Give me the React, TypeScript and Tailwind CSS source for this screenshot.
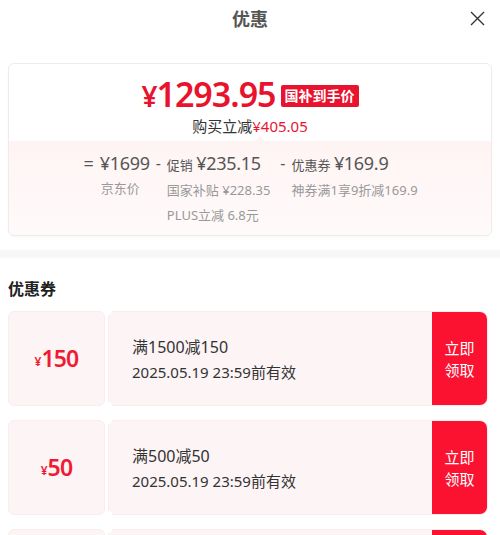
import React from "react";

const coupons = [
  { amt: "150", title: "满1500减150", date: "2025.05.19 23:59前有效" },
  { amt: "50", title: "满500减50", date: "2025.05.19 23:59前有效" },
  { amt: "20", title: "满200减20", date: "2025.05.19 23:59前有效" },
];

function Coupon({ amt, title, date }: { amt: string; title: string; date: string }) {
  return (
    <div className="relative flex h-[95px] w-[480px] shrink-0 gap-[3px]">
      <div className="flex w-[97px] items-center justify-center rounded-[6px] border border-[#fbecee] bg-[#fdf4f5] text-[#f01a32]">
        <span className="mt-[6px] text-[12px] font-semibold">¥</span>
        <span className="text-[23px] font-semibold leading-none tracking-[-0.8px]">{amt}</span>
      </div>
      <div className="flex flex-1 overflow-hidden rounded-[6px] rounded-r-[8px] border border-[#fbecee] bg-[#fdf4f5]">
        <div className="flex flex-1 flex-col justify-center pl-[23px] text-[#333]">
          <div className="text-[16px] leading-[26px]">{title}</div>
          <div className="text-[15px] leading-[24px]">{date}</div>
        </div>
        <div className="flex w-[55px] flex-col items-center justify-center bg-[#fa1230] text-[15px] leading-[22px] text-white">
          <span>立即</span>
          <span>领取</span>
        </div>
      </div>
      <div className="absolute left-[96px] top-[-4px] h-[8px] w-[8px] rounded-full bg-white" />
      <div className="absolute bottom-[-4px] left-[96px] h-[8px] w-[8px] rounded-full bg-white" />
    </div>
  );
}

export default function App() {
  return (
    <div
      className="h-[535px] w-[500px] overflow-hidden bg-white"
      style={{ fontFamily: '"Noto Sans", "Noto Sans CJK SC", sans-serif' }}
    >
      <div className="relative flex h-[38px] items-center justify-center">
        <span className="text-[18px] font-bold text-[#555]">优惠</span>
        <svg
          className="absolute right-[15px] top-[11px]"
          width="15"
          height="15"
          viewBox="0 0 15 15"
          fill="none"
          stroke="#333"
          strokeWidth="1.4"
        >
          <path d="M1 1 L14 14 M14 1 L1 14" />
        </svg>
      </div>

      <div className="mx-[8px] mt-[25px] overflow-hidden rounded-[6px] border border-[#f1eaea] shadow-[0_1px_2px_rgba(0,0,0,0.03)]">
        <div className="flex flex-col items-center pb-[5px] pt-[12px]">
          <div className="flex items-center">
            <span className="text-[34px] font-semibold leading-[36px] tracking-[-1px] text-[#e8142f]">
              <span className="text-[28px]">¥</span>1293.95
            </span>
            <span className="ml-[5px] mt-[2px] rounded-[2px] bg-[#e8142f] px-[4px] text-[14px] font-bold leading-[22px] text-white">
              国补到手价
            </span>
          </div>
          <div className="mt-[2px] text-[15px] leading-[20px] text-[#333]">
            购买立减<span className="text-[#e8142f]">¥405.05</span>
          </div>
        </div>
        <div className="relative bg-gradient-to-b from-[#fff4f4] to-[#fffafa] pb-[7px] pt-[9px]">
          <div className="absolute left-[246px] top-[-5px] h-0 w-0 border-x-[5px] border-b-[5px] border-x-transparent border-b-[#fff4f4]" />
          <div className="flex justify-center pl-[1px] text-[#999]">
            <span className="mr-[6px] text-[18px] leading-[26px] text-[#555]">=</span>
            <div className="flex flex-col">
              <span className="text-[18px] leading-[26px] tracking-[-0.3px] text-[#555]">¥1699</span>
              <span className="pl-[1px] text-[13px] leading-[25px]">京东价</span>
            </div>
            <span className="mx-[6px] text-[16px] leading-[26px] text-[#555]">-</span>
            <div className="flex flex-col">
              <span className="leading-[26px] text-[#555]">
                <span className="text-[13px]">促销 </span>
                <span className="text-[18px] tracking-[-0.3px]">¥235.15</span>
              </span>
              <span className="text-[13px] leading-[25px]">国家补贴 ¥228.35</span>
              <span className="text-[13px] leading-[25px]">PLUS立减 6.8元</span>
            </div>
            <span className="ml-[10px] mr-[6px] text-[16px] leading-[26px] text-[#555]">-</span>
            <div className="flex flex-col">
              <span className="leading-[26px] text-[#555]">
                <span className="text-[13px]">优惠券 </span>
                <span className="text-[18px] tracking-[-0.3px]">¥169.9</span>
              </span>
              <span className="text-[13px] leading-[25px]">神券满1享9折减169.9</span>
            </div>
          </div>
        </div>
      </div>

      <div className="mt-[14px] h-[8px] bg-[#f7f7fa]" />

      <div className="px-[8px] pt-[20px] text-[16px] font-bold leading-[22px] text-[#222]">优惠券</div>

      <div className="mt-[11px] flex flex-col gap-[14px] px-[8px]">
        {coupons.map((c) => (
          <Coupon key={c.amt} {...c} />
        ))}
      </div>
    </div>
  );
}
